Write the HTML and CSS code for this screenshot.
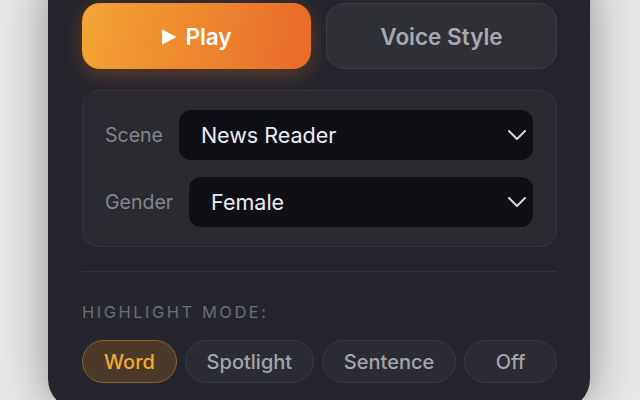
FILE: index.html
```html
<!DOCTYPE html>
<html lang="en">
<head>
<meta charset="utf-8">
<title>Voice Panel</title>
<link rel="stylesheet" href="styles.css">
</head>
<body>
<div class="card">
  <div class="actions">
    <button class="btn btn-play">
      <svg class="play-icon" viewBox="0 0 14 14" width="16" height="16"><path d="M1 0.5 L13.5 7 L1 13.5 Z" fill="#fff"/></svg>
      <span>Play</span>
    </button>
    <button class="btn btn-style">Voice Style</button>
  </div>

  <div class="settings">
    <div class="row">
      <span class="label">Scene</span>
      <div class="select">
        <span class="value">News Reader</span>
        <svg class="chev" viewBox="0 0 18 10" width="18" height="10"><path d="M1 1 L9 9 L17 1" fill="none" stroke="#d6d6dc" stroke-width="2" stroke-linecap="round" stroke-linejoin="round"/></svg>
      </div>
    </div>
    <div class="row">
      <span class="label">Gender</span>
      <div class="select">
        <span class="value">Female</span>
        <svg class="chev" viewBox="0 0 18 10" width="18" height="10"><path d="M1 1 L9 9 L17 1" fill="none" stroke="#d6d6dc" stroke-width="2" stroke-linecap="round" stroke-linejoin="round"/></svg>
      </div>
    </div>
  </div>

  <div class="divider"></div>

  <div class="section-title">HIGHLIGHT MODE:</div>

  <div class="pills">
    <button class="pill active">Word</button>
    <button class="pill">Spotlight</button>
    <button class="pill">Sentence</button>
    <button class="pill">Off</button>
  </div>
</div>
</body>
</html>
```

FILE: styles.css
```css
* { box-sizing: border-box; }

html, body {
  margin: 0;
  padding: 0;
  height: 400px;
  overflow: hidden;
}

body {
  background: #e8e8e8;
  font-family: Inter, "Noto Sans", "Liberation Sans", sans-serif;
}

.card {
  width: 542px;
  margin-left: 48px;
  margin-top: -30px;
  padding: 33px 33px 26px 34px;
  background: #24252d;
  border-radius: 30px;
  box-shadow: 0 0 48px rgba(0, 0, 0, 0.38);
}

.actions {
  display: flex;
  gap: 15px;
}

.btn {
  flex: 1;
  height: 66px;
  border-radius: 18px;
  font-family: inherit;
  font-size: 22.5px;
  font-weight: 600;
  display: flex;
  align-items: center;
  justify-content: center;
  gap: 8px;
  cursor: pointer;
}

.btn-play {
  border: none;
  color: #ffffff;
  background: linear-gradient(100deg, #f3a534 0%, #ee8a2e 45%, #ea6a2a 100%);
  box-shadow: 0 6px 22px rgba(236, 120, 40, 0.28);
}

.play-icon { display: block; margin-top: 1px; }

.btn-style {
  background: #2f2f36;
  border: 1px solid #3c3d45;
  color: #a8a8b0;
}

.settings {
  margin-top: 21px;
  background: #2a2a31;
  border: 1px solid #35363d;
  border-radius: 16px;
  padding: 19px 23px 19px 22px;
  display: flex;
  flex-direction: column;
  gap: 17px;
}

.row {
  display: flex;
  align-items: center;
  gap: 16px;
}

.label {
  font-size: 19.5px;
  color: #85868d;
}

.select {
  flex: 1;
  height: 50px;
  background: #0f1016;
  border-radius: 12px;
  display: flex;
  align-items: center;
  justify-content: space-between;
  padding: 0 7px 0 22px;
}

.value {
  font-size: 21.5px;
  color: #ececf1;
}

.chev { display: block; }

.divider {
  margin-top: 24px;
  height: 1px;
  background: #32333b;
}

.section-title {
  margin-top: 30px;
  font-size: 16.5px;
  line-height: 20px;
  letter-spacing: 2.5px;
  color: #6c6d75;
}

.pills {
  margin-top: 18px;
  display: flex;
  justify-content: space-between;
}

.pill {
  height: 43px;
  min-width: 93px;
  padding: 0 21px;
  border-radius: 22px;
  background: #2b2c33;
  border: 1px solid #3a3b43;
  color: #a4a4ac;
  font-family: inherit;
  font-size: 20px;
  font-weight: 500;
}

.pill.active {
  background: #4b392a;
  border-color: #8a6232;
  color: #f2a933;
}
```
